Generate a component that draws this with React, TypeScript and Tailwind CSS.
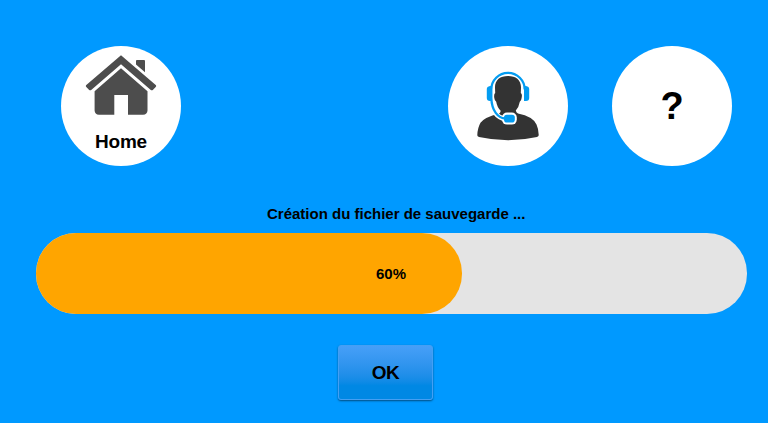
import React from "react";

const PROGRESS = 60;

function HomeIcon() {
  return (
    <svg width="72" height="62" viewBox="85 54 72 62" className="block">
      <path
        fill="#4d4d4d"
        d="M136 60.8 Q136 60 137 60 H144 Q145 60 145 61 V72.3 L136 64.4Z M121 55.2 L156 85.3 Q156.5 86.2 155.7 87 L152.8 90 Q151.8 90.8 150.5 89.8 L121 64.3 L91.5 89.8 Q90.2 90.8 89.2 90 L86.3 87 Q85.5 86.2 86 85.3Z M121 68.2 L147.5 91.2 V110.5 Q147.3 114.6 143 114.8 H128 V95 H114.3 V114.8 H99 Q94.8 114.6 94.6 110.5 V91.2Z"
      />
    </svg>
  );
}

function SupportIcon() {
  return (
    <svg width="64" height="72" viewBox="476 70 64 72" className="block">
      <path
        fill="#333333"
        d="M508 76 C516 76 521.3 80 521 88 L520.8 93 Q522.5 94 521.6 98 Q521.3 101 519.8 101.8 Q518.8 107.5 515.8 110.5 Q516 112.5 518 113.5 Q533 116.5 536.5 124.5 Q538.8 129.5 538.7 135.3 Q538.6 136.5 537 137 Q523 140.2 508 140.2 Q493 140.2 479 137 Q477.3 136.5 477.3 135.3 Q477.5 128 480.5 122.8 Q484.5 117 499 113.7 Q501 112.5 500.5 110.5 Q497.2 107.5 496.2 101.8 Q494.7 101 494.3 98 Q493.7 94 495.2 93 L495 88 C494.7 80 500 76 508 76Z"
      />
      <path d="M491.3 99 C492 111 497 118 505 118.6" fill="none" stroke="#fff" strokeWidth="4.6" />
      <rect x="502" y="112.6" width="14.8" height="12" rx="5" fill="#fff" />
      <path
        d="M491.3 99 V89.5 A16.7 16.7 0 0 1 524.7 89.5 M491.3 98 C491.8 111 498 118 505 118.5"
        fill="none"
        stroke="#039cf1"
        strokeWidth="2.3"
      />
      <path
        fill="#039cf1"
        d="M492 86 V101 H490 Q486.8 101 486.8 98 V89 Q486.8 86.5 490 86Z M524 86 V101 H526 Q529.2 101 529.2 98 V89 Q529.2 86.5 526 86Z"
      />
      <rect x="504" y="114.7" width="10.8" height="7.8" rx="2.8" fill="#039cf1" />
    </svg>
  );
}

function RoundButton({ label, className, children }: { label: string; className: string; children: React.ReactNode }) {
  return (
    <button
      aria-label={label}
      className={"flex h-[120px] w-[120px] shrink-0 flex-col items-center rounded-full bg-white " + className}
    >
      {children}
    </button>
  );
}

export default function App() {
  return (
    <main className="h-[423px] w-[768px] overflow-hidden bg-[#0099ff] pt-[46px] font-['Liberation_Sans',Arial,sans-serif] font-bold text-black">
      <nav className="flex pl-[61px]">
        <RoundButton label="Home" className="pt-2">
          <HomeIcon />
          <span className="mt-[15px] text-[19px] leading-[22px] tracking-[-0.2px]">Home</span>
        </RoundButton>
        <RoundButton label="Support" className="ml-[267px] pt-6">
          <SupportIcon />
        </RoundButton>
        <RoundButton label="Aide" className="ml-[44px] justify-center">
          <span className="text-[38px] leading-[44px]">?</span>
        </RoundButton>
      </nav>

      <p className="mt-[39px] pl-[267px] text-[15px] leading-[18px] whitespace-nowrap">
        Création du fichier de sauvegarde ...
      </p>

      <div className="mt-[10px] ml-[36px] h-[81px] w-[711px] rounded-[40px] bg-[#e4e4e4]">
        <div
          className="flex h-full items-center rounded-[40px] bg-[#ffa500] pt-px pl-[340px] text-[15px]"
          style={{ width: Math.floor((711 * PROGRESS) / 100) }}
        >
          {PROGRESS}%
        </div>
      </div>

      <button className="mt-[31px] ml-[338px] flex h-[55px] w-[95px] items-center justify-center rounded-[3px] border border-[#459ff3] bg-linear-to-b from-[#469ff8] to-[#0088e4] to-75% pt-px text-[19px] tracking-[-0.5px] shadow-[0_1px_2px_rgba(0,0,0,0.5)]">
        OK
      </button>
    </main>
  );
}
